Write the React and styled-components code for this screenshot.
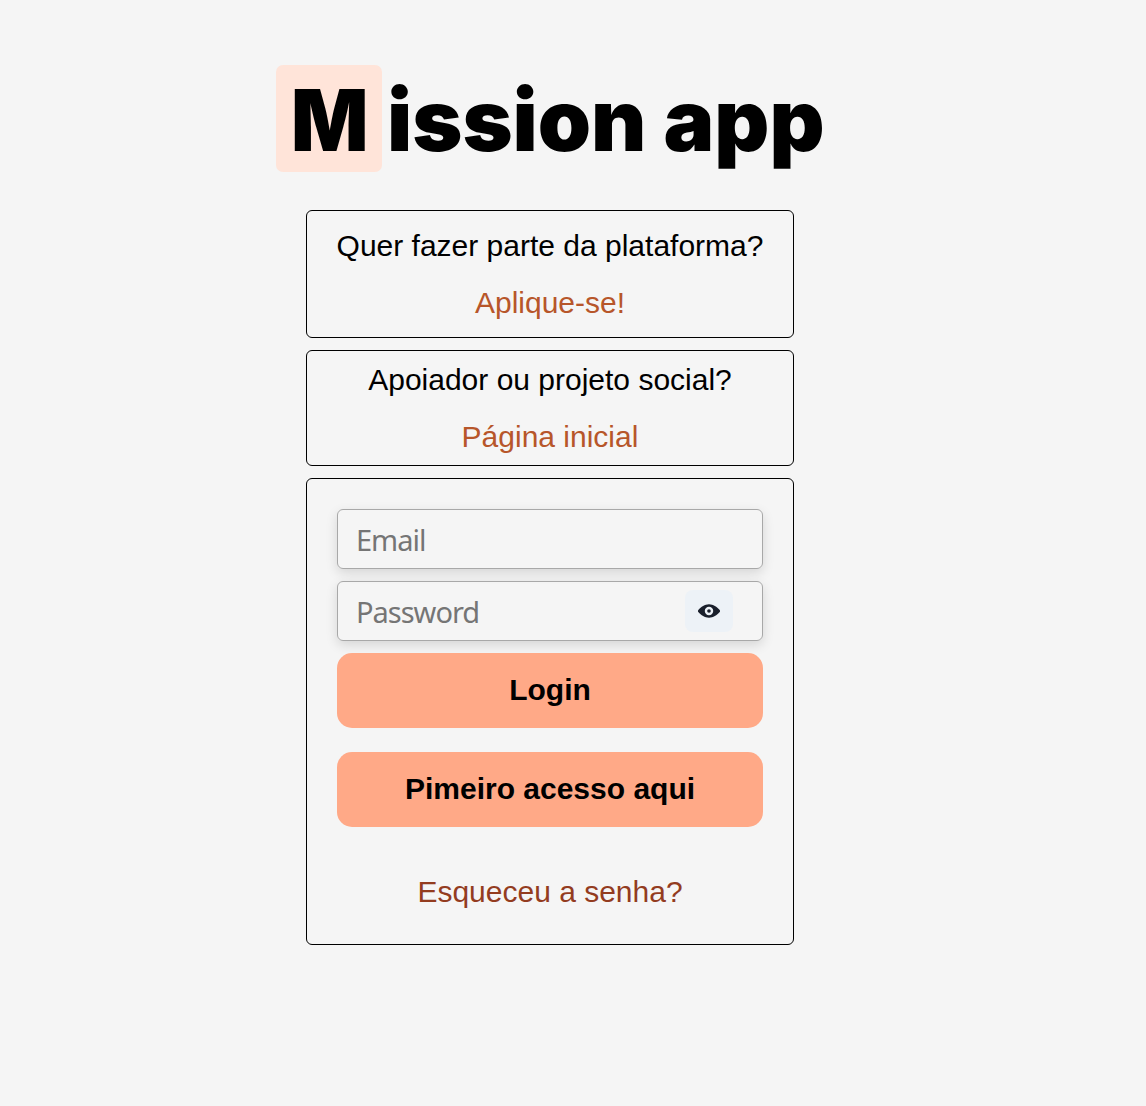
import React from "react";
import styled, { createGlobalStyle } from "styled-components";

const Global = createGlobalStyle`
  * { box-sizing: border-box; }
  body { margin: 0; background: #f5f5f5; }
`;

const Page = styled.main`
  width: 1100px;
  min-height: 1106px;
  padding-top: 65px;
  display: flex;
  flex-direction: column;
  align-items: center;
  font-family: "Liberation Sans", Arial, sans-serif;
  color: #000;
`;

const Logo = styled.h1`
  display: flex;
  align-items: stretch;
  width: 548px;
  height: 107px;
  margin: 0 0 38px;
  font: 900 85.3px/110px Inter, sans-serif;
  white-space: nowrap;
`;

const Initial = styled.span`
  display: flex;
  justify-content: center;
  flex: 0 0 106px;
  margin-right: 5px;
  padding-left: 2px;
  border-radius: 7px;
  background: #ffe4d9;
`;

const Letter = styled.span`
  transform: scaleX(0.95);
`;

const Wordmark = styled.span`
  letter-spacing: 0;
`;

const Card = styled.section`
  display: flex;
  flex-direction: column;
  align-items: center;
  width: 488px;
  height: ${(p) => p.$height}px;
  margin-bottom: 12px;
  padding-top: ${(p) => p.$top}px;
  border: 1px solid #000;
  border-radius: 6px;
`;

const Line = styled.p`
  margin: 0 0 12px;
  font-size: 30px;
  line-height: 45px;
  white-space: nowrap;
`;

const Link = styled.a`
  color: ${(p) => p.$color || "#b7562a"};
  font-size: 30px;
  line-height: 45px;
  white-space: nowrap;
`;

const Field = styled.div`
  display: flex;
  align-items: center;
  justify-content: space-between;
  width: 426px;
  height: 60px;
  margin-bottom: 12px;
  padding: 0 29px 0 18px;
  border: 1px solid #a8a8a8;
  border-radius: 6px;
  box-shadow: 0 4px 12px rgba(0, 0, 0, 0.13);
`;

const Input = styled.input`
  flex: 1;
  min-width: 0;
  padding: 2px 0 0;
  border: 0;
  outline: 0;
  background: transparent;
  font: 29px/42px "Noto Sans", sans-serif;
  letter-spacing: -1px;
  &::placeholder { color: #757575; opacity: 1; }
`;

const Toggle = styled.button`
  display: grid;
  place-items: center;
  width: 48px;
  height: 42px;
  padding: 0;
  border: 0;
  border-radius: 8px;
  background: #edf2f7;
`;

const Submit = styled.button`
  width: 426px;
  height: 75px;
  margin: 0 0 24px;
  padding: 0 0 2px;
  border: 0;
  border-radius: 15px;
  background: #ffa987;
  color: #000;
  font: 700 30px/45px "Liberation Sans", Arial, sans-serif;
`;

const Forgot = styled(Link)`
  margin-top: 18px;
`;

export default function App() {
  return (
    <>
      <Global />
      <Page>
        <Logo>
          <Initial><Letter>M</Letter></Initial>
          <Wordmark>ission app</Wordmark>
        </Logo>
        <Card $height={128} $top={12}>
          <Line>Quer fazer parte da plataforma?</Line>
          <Link>Aplique-se!</Link>
        </Card>
        <Card $height={116} $top={6}>
          <Line>Apoiador ou projeto social?</Line>
          <Link>Página inicial</Link>
        </Card>
        <Card $height={467} $top={30}>
          <Field><Input placeholder="Email" /></Field>
          <Field>
            <Input type="password" placeholder="Password" />
            <Toggle type="button" aria-label="Password">
              <svg width="22" height="22" viewBox="0 0 24 24" fill="#1a202c">
                <path d="M23.432,10.524C20.787,7.614,16.4,4.538,12,4.6,7.6,4.537,3.213,7.615.568,10.524a2.211,2.211,0,0,0,0,2.948C3.182,16.351,7.507,19.4,11.839,19.4h.308c4.347,0,8.671-3.049,11.288-5.929A2.21,2.21,0,0,0,23.432,10.524ZM7.4,12A4.6,4.6,0,1,1,12,16.6,4.6,4.6,0,0,1,7.4,12Z" />
                <circle cx="12" cy="12" r="2" />
              </svg>
            </Toggle>
          </Field>
          <Submit>Login</Submit>
          <Submit>Pimeiro acesso aqui</Submit>
          <Forgot $color="#933c1f">Esqueceu a senha?</Forgot>
        </Card>
      </Page>
    </>
  );
}
